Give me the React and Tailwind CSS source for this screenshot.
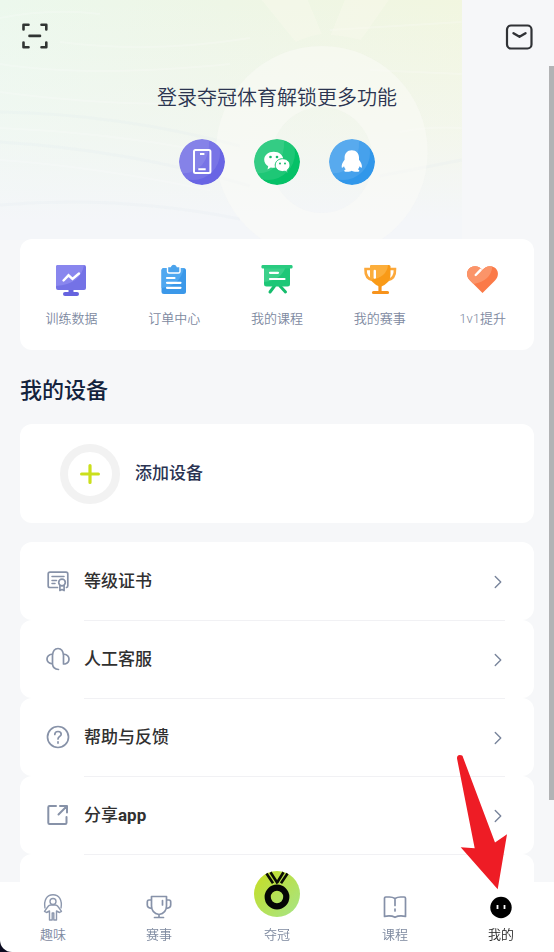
import { ChevronRight } from "lucide-react";

const HeaderArt = () => (
  <div className="absolute left-0 top-0 -z-10 h-60 w-5/6 overflow-hidden bg-[linear-gradient(to_bottom,#f5f7fa00_0%,#f5f7fa77_55%,#f4f6f9_92%),linear-gradient(100deg,#ecf8ed_0%,#eef6e6_45%,#f2f6df_100%)]">
    <svg className="h-full w-full" viewBox="0 0 462 240" preserveAspectRatio="none" fill="none">
      <g stroke="#fff" strokeOpacity=".2" strokeWidth="2">
        <path d="M0 18q50-10 100-4M0 64q90 14 230 0M0 92q120 16 220 10M60 42q90 12 190-4"/>
        <path d="M0 128q100 4 200 22M0 160q90 6 210 30M330 30l132-8M370 70l92 4M400 132q30-6 62-4"/>
      </g>
      <g stroke="#dfe9ef" strokeOpacity=".18" strokeWidth="3">
        <path d="M0 112q120 2 240 34M0 142q130 8 250 44M0 205q120-10 240 14M380 176l82-16"/>
      </g>
      <path d="M262 0h46l14 34q-14 2-26 8zM345 0h44l-28 40q-14-4-30-5z" fill="#fbfaee" fillOpacity=".4"/>
      <path d="M216 152a106 106 0 1 1 212 0a106 106 0 1 1-212 0zM271 160a51 53 0 1 0 102 0a51 53 0 1 0-102 0z" fillRule="evenodd" fill="#fbfcf8" fillOpacity=".5"/>
    </svg>
  </div>
);

const ScanIcon = () => (
  <svg width="28" height="28" viewBox="0 0 28 28" fill="none" stroke="#303432" strokeWidth="2.6" strokeLinecap="round" strokeLinejoin="round">
    <path d="M2.5 7.500V2.800H7.500M20.500 2.800h4.800V7.500M2.500 20.500v4.800H7.500M20.500 25.300h4.800V20.500M8.500 13.900h10.500"/>
  </svg>
);

const MailIcon = () => (
  <svg width="28" height="28" viewBox="0 0 28 28" fill="none" stroke="#303236" strokeWidth="2.2" strokeLinecap="round" strokeLinejoin="round">
    <rect x="2" y="3.500" width="24.500" height="23" rx="4"/>
    <path d="M8.500 11.200l6 3.600 6-3.600" strokeWidth="2.400"/>
  </svg>
);

function Disc({ color, children }){
  return (
    <svg width="46" height="46" viewBox="0 0 46 46" className="rounded-full">
      <circle cx="23" cy="23" r="23" fill={color}/>
      <circle cx="14" cy="14" r="27" fill="#fff" fillOpacity=".1"/>
      <path d="M0 0h30q1 16-7 26-9 10-23 8z" fill="#fff" fillOpacity=".1"/>
      {children}
    </svg>
  );
}

const logins = [
  { key:'phone', label:'手机登录', icon:(
    <Disc color="#6965e4">
      <rect x="15" y="11" width="16.400" height="23" rx="1.500" fill="none" stroke="#fff" strokeWidth="2"/>
      <path d="M21 14.900h4.400M19.300 30.200h7.400" stroke="#fff" strokeWidth="2"/>
    </Disc>
  ) },
  { key:'wechat', label:'微信登录', icon:(
    <Disc color="#05c167">
      <path d="M19.7 12.8c5.4 0 9.6 3.5 9.6 8s-4.2 8-9.6 8c-1 0-2-.1-2.900-.4l-3.300 2 .7-3.100c-2.400-1.500-4-3.900-4-6.500 0-4.500 4.200-8 9.500-8z" fill="#fff"/>
      <circle cx="16.500" cy="18" r="1.300" fill="#17bb6c"/>
      <circle cx="23" cy="18" r="1.300" fill="#17bb6c"/>
      <path d="M28.600 19.700c4.200 0 7.400 2.900 7.400 6.400 0 2.100-1.200 4-2.900 5.100l.5 2.300-2.500-1.300c-.8.2-1.600.3-2.500.3-4.100 0-7.400-2.800-7.400-6.400s3.300-6.400 7.400-6.400z" fill="#fff" stroke="#1bc273" strokeWidth="1"/>
      <circle cx="26" cy="24.500" r="1" fill="#17bb6c"/>
      <circle cx="31" cy="24.500" r="1" fill="#17bb6c"/>
    </Disc>
  ) },
  { key:'qq', label:'QQ登录', icon:(
    <Disc color="#3197ea">
      <path d="M22.800 11.300c4.600 0 7.200 3.400 7.200 7.300v2.200c1.700 2.100 3.200 5 2.900 7.100-.2 1.400-1.200.9-2.300-.6-.3 1.200-.9 2.200-1.700 3 1 .5 1.600 1 1.400 1.600-.4 1.200-5.600 1.300-7.500-.1-1.900 1.400-7.100 1.300-7.500.1-.2-.6.400-1.100 1.400-1.600-.8-.8-1.400-1.800-1.700-3-1.100 1.500-2.100 2-2.300.6-.3-2.100 1.200-5 2.900-7.100v-2.200c0-3.900 2.600-7.300 7.200-7.300z" fill="#fff"/>
    </Disc>
  ) },
];

const features = [
  { label:'训练数据', icon:(
    <>
      <path d="M15.500 29h5v3h-5z" fill="#6663df"/>
      <rect x="3" y="4" width="30" height="25" rx="2" fill="#7472e6"/>
      <path d="M5 4h26q-3 19-28 21V6q0-2 2-2z" fill="#8986ee"/>
      <rect x="10" y="31" width="16" height="4" rx="2" fill="#6663df"/>
      <path d="M10.500 19.500l5-5.200 4 3.700 6.500-5.500" fill="none" stroke="#fff" strokeWidth="2.400" strokeLinecap="round"/>
    </>
  ) },
  { label:'订单中心', icon:(
    <>
      <rect x="5.500" y="7" width="24.500" height="26" rx="2.500" fill="#3b98e9"/>
      <path d="M8 7h20q-4 18-22.500 20V9.500Q5.500 7 8 7z" fill="#50a8f0"/>
      <path d="M11.500 5.500h2.800q1-2.500 3.500-2.500t3.500 2.500h2.700v5q0 1.500-1.500 1.500H13q-1.500 0-1.500-1.500z" fill="#4ba3ec" stroke="#fff" strokeWidth="1.400"/>
      <path d="M11 17h7.500M11 21.800h13.500M11 26.800h13.500" stroke="#fff" strokeWidth="2.200" strokeLinecap="round"/>
    </>
  ) },
  { label:'我的课程', icon:(
    <>
      <path d="M15.500 25l-4.500 6M21 25l5.500 6" stroke="#16bd6d" strokeWidth="3" strokeLinecap="round"/>
      <path d="M5 5h26v18q0 2.500-2.500 2.500h-21Q5 25.500 5 23z" fill="#1dc777"/>
      <path d="M5 5h22q-4 14-22 16z" fill="#3bd08a"/>
      <rect x="2.500" y="4" width="31" height="3.400" rx="1.200" fill="#29cb80"/>
      <path d="M11 11.800h8M11 18h14.500" stroke="#fff" strokeWidth="2.200" strokeLinecap="round"/>
    </>
  ) },
  { label:'我的赛事', icon:(
    <>
      <path d="M9 8H3.500q-.5 10 8 11.500M27.500 8h5.500q.5 10-8 11.500" fill="none" stroke="#fca83a" strokeWidth="2.600"/>
      <path d="M18 24v7M11.500 31.500h14" stroke="#f7931c" strokeWidth="3.200" strokeLinecap="round"/>
      <path d="M9.500 4h17.500q1.500 0 1.500 1.500V14q0 8-10.200 12Q8 22 8 14V5.500Q8 4 9.500 4z" fill="#f99a17"/>
      <path d="M9.500 4H26q-1 12-17 15-1-2.500-1-5V5.500Q8 4 9.500 4z" fill="#fcae3b"/>
      <path d="M12.800 10v6.500" stroke="#fff" strokeWidth="2.400" strokeLinecap="round"/>
    </>
  ) },
  { label:'1v1提升', icon:(
    <>
      <path d="M17.500 32L5 19.500C.5 15 1.500 9 5.500 6.500c4-2.500 9-1.500 12 2.500 3-4 8-5 12-2.500s5 8.500.5 13z" fill="#fb7a48"/>
      <path d="M5 19.500C.5 15 1.500 9 5.500 6.500c4-2.500 9-1.500 12 2.500 2.500-3.300 6.300-4.500 9.800-3.400Q26 20 8.500 23z" fill="#fb9469"/>
      <path d="M10.700 14l5-5.200" stroke="#fff" strokeWidth="2.400" strokeLinecap="round"/>
    </>
  ) },
];

const rows = [
  { label:'等级证书', icon:(
    <>
      <path d="M11.500 18.500H4q-1.800 0-1.800-1.800V5q0-1.800 1.800-1.800h16Q21.800 3.200 21.800 5v11.700q0 1.500-1.300 1.800"/>
      <path d="M6 7.500h12M6 11.500h4.500M6 14.500h3" strokeWidth="1.500"/>
      <circle cx="16" cy="13.500" r="3.300"/>
      <path d="M13.900 16.500v5l2.100-1 2.100 1v-5"/>
    </>
  ) },
  { label:'人工客服', icon:(
    <>
      <path d="M6.500 17V8.500Q7 1.500 12 1.500t5.500 7V17H19q4-1 4-5t-5.500-5M6.500 7Q1 8 1 12t5.500 5q.5 5 6 5.500"/>
    </>
  ) },
  { label:'帮助与反馈', icon:(
    <>
      <circle cx="12" cy="12" r="10.500"/>
      <path d="M8.800 9.500q0-3 3.200-3t3.200 2.800c0 2-3.200 2.300-3.200 4.700"/>
      <path d="M12 16.800v1.300"/>
    </>
  ) },
  { label:<>分享<b>app</b></>, icon:(
    <>
      <path d="M10 3H3.500Q2.300 3 2.300 4.200v15.600q0 1.200 1.200 1.200h15.800q1.200 0 1.200-1.200V14M14 3h7v6.500M20.500 3.500L12.500 11.500" strokeWidth="2"/>
    </>
  ) },
  { label:'', icon:null },
];

const tabs = [
  { label:'趣味', icon:(
    <svg width="24" height="28" viewBox="0 0 24 28" fill="none" stroke="#8d98ae" strokeWidth="1.400" strokeLinejoin="round">
      <path d="M4 15.500C2.500 7 6 1.800 12 1.800S21.500 7 20 15.500"/>
      <circle cx="12" cy="8.500" r="3"/>
      <path d="M8.500 27V18l-3 1.500-2-1.200L7 13.500q1-1.500 3-1.500h4q2 0 3 1.500l3.500 4.800-2 1.200-3-1.500v9h-2.700v-7h-1.600v7z"/>
    </svg>
  ) },
  { label:'赛事', icon:(
    <svg width="26" height="28" viewBox="0 0 26 28" fill="none" stroke="#8792a9" strokeWidth="1.700" strokeLinecap="round" strokeLinejoin="round">
      <path d="M5.500 3.500h15V13q0 7-7.500 8.500Q5.500 20 5.500 13zM5.500 7H3Q1.300 7 1.300 9v3q0 3 4.500 3.500M20.500 7H23q1.700 0 1.700 2v3q0 3-4.500 3.500M13 21.500v2.500M8.500 24.500h9M16.500 7.500v4.500"/>
    </svg>
  ) },
  { label:'夺冠', big:true, icon:(
    <svg width="46" height="46" viewBox="0 0 46 46">
      <defs>
        <linearGradient id="lime" x1="0" y1="0" x2="1" y2="1">
          <stop offset=".1" stopColor="#c3de2b"/>
          <stop offset="1" stopColor="#a6e589"/>
        </linearGradient>
      </defs>
      <circle cx="23" cy="23" r="23" fill="url(#lime)"/>
      <path d="M12.500 2.500l6.500 9.800M16.500 1.200l7.200 11.300M33.500 2.500L27 12.300M29.500 1.200l-6.200 10" stroke="#0b0d05" strokeWidth="2.600"/>
      <circle cx="23" cy="26" r="9.300" fill="none" stroke="#050505" strokeWidth="6.200"/>
    </svg>
  ) },
  { label:'课程', icon:(
    <svg width="24" height="28" viewBox="0 0 24 28" fill="none" stroke="#8590a8" strokeWidth="1.700" strokeLinecap="round" strokeLinejoin="round">
      <path d="M12 5.500Q9.500 4 6.500 4H2.800Q1.500 4 1.500 5.200V23.500q6-1.500 10.500.800 4.500-2.300 10.500-.800V5.200Q22.500 4 21.200 4h-3.700Q14.500 4 12 5.500zM12 6v6.500M12 16v2"/>
    </svg>
  ) },
  { label:'我的', active:true, icon:(
    <svg width="24" height="28" viewBox="0 0 24 28">
      <circle cx="12" cy="14.500" r="10.700" fill="#000"/>
      <path d="M8.500 12v4M15.500 12v4" stroke="#fff" strokeWidth="1.800"/>
    </svg>
  ) },
];

function Row({ label, icon }){
  return (
    <li className="group flex h-[78px] rounded-xl bg-white pl-[26px]">
      <button className="flex flex-1 items-center gap-[14px] text-left">
        <svg width="24" height="24" viewBox="0 0 24 24" fill="none" stroke="#8792a8" strokeWidth="1.700" strokeLinecap="round" strokeLinejoin="round">{icon}</svg>
        <span className="mr-[29px] flex h-full flex-1 items-center justify-between border-t border-[#f1f1f4] group-first:border-transparent">
          <span className="text-[17px] font-medium text-[#303030]">{label}</span>
          {label && <ChevronRight size={22} strokeWidth={1.500} className="-mr-1 text-[#78849b]"/>}
        </span>
      </button>
    </li>
  );
}

export default function App(){
  return (
    <div className="relative isolate min-h-screen bg-[#f6f7f9] font-[Roboto,'Noto_Sans_CJK_SC',sans-serif]">
      <HeaderArt/>

      <header className="flex justify-between px-[21px] pt-[22px]">
        <button aria-label="扫一扫"><ScanIcon/></button>
        <button aria-label="消息"><MailIcon/></button>
      </header>

      <main className="px-5">
        <h1 className="mt-[34px] text-center text-[20px] font-[350] leading-7 text-[#2b3450]">登录夺冠体育解锁更多功能</h1>
        <div className="mt-[27px] flex justify-center gap-[29px]">
          {logins.map(l => <button key={l.key} aria-label={l.label}>{l.icon}</button>)}
        </div>

        <div className="mt-[54px] grid grid-cols-5 rounded-xl bg-white pb-[21px] pt-[22px]">
          {features.map(f => (
            <button key={f.label} className="flex flex-col items-center gap-3">
              <svg width="36" height="36" viewBox="0 0 36 36" fill="none">{f.icon}</svg>
              <span className="text-[13px] font-[350] leading-5 text-[#7d899f]">{f.label}</span>
            </button>
          ))}
        </div>

        <h2 className="mt-[27px] text-[22px] font-medium leading-7 text-[#14233d]">我的设备</h2>
        <button className="mt-[19px] flex w-full items-center gap-[15px] rounded-xl bg-white px-10 pb-[19px] pt-5">
          <span className="grid size-[60px] place-items-center rounded-full border-8 border-[#f2f2f2]">
            <svg width="20" height="20" viewBox="0 0 20 20" stroke="#cbdf1c" strokeWidth="3.200" strokeLinecap="round"><path d="M10 1.600v16.800M1.600 10h16.800"/></svg>
          </span>
          <span className="text-[17px] font-medium text-[#2a3352]">添加设备</span>
        </button>

        <ul className="mt-[19px]">
          {rows.map((r, i) => <Row key={i} {...r}/>)}
        </ul>
      </main>

      <div className="fixed right-0 top-[66px] h-[734px] w-[5px] bg-[#b2b3b5]"></div>

      <div className="fixed inset-x-0 bottom-0 bg-[linear-gradient(to_right,#0b0b20_50%,#fff_50%)]">
        <nav className="grid h-[70px] grid-cols-[106fr_106fr_130fr_106fr_106fr] grid-rows-1 items-end rounded-bl-xl bg-white pb-[9px]">
          {tabs.map(t => (
            <button key={t.label} className={"flex flex-col items-center " + (t.big ? "gap-[10px]" : "gap-[6px]")}>
              {t.icon}
              <span className={"text-[13px] font-[350] leading-4 " + (t.active ? "text-[#1c1c1c]" : "text-[#7d899f]")}>{t.label}</span>
            </button>
          ))}
        </nav>
      </div>

      <svg className="pointer-events-none fixed bottom-[62px] right-[46px]" width="52" height="136" viewBox="0 0 52 136">
        <path d="M1 4.500Q.8 1 3.800 1T7 3.300l32 85.200L51 80.300l-9.300 55L4.700 93.300l14 1z" fill="#ee1c25"/>
      </svg>
    </div>
  );
}
